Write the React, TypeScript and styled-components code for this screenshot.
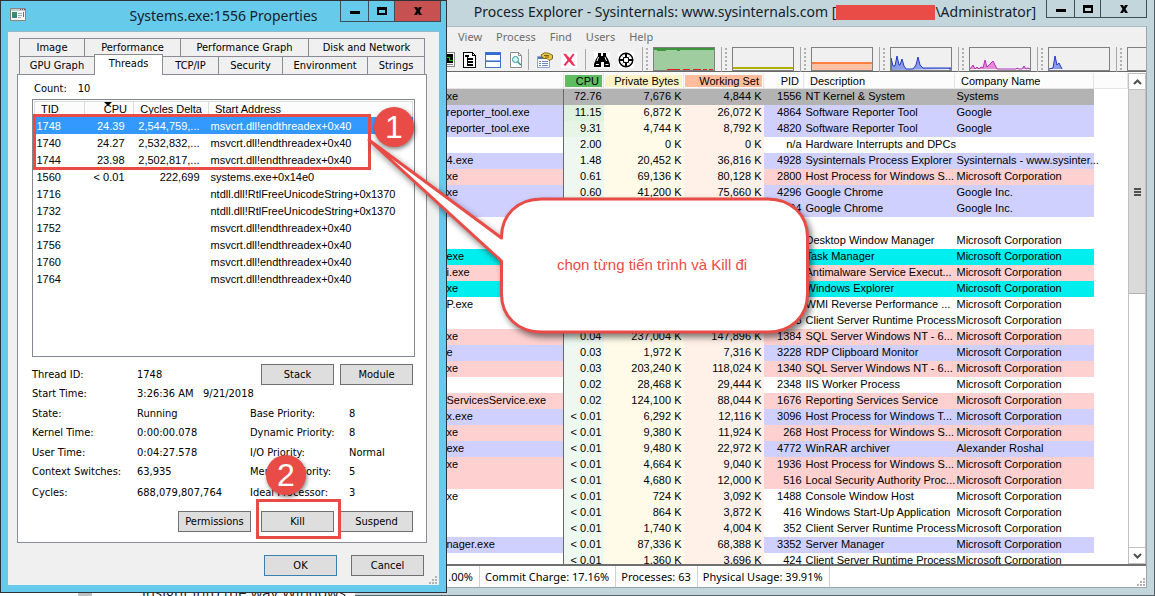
import React from "react";
import styled, { createGlobalStyle, css } from "styled-components";

const UI = `"DejaVu Sans Condensed", "Noto Sans", sans-serif`;
const LIST = `"Liberation Sans", Arial, sans-serif`;
const TITLE = `"Noto Sans", "Open Sans", sans-serif`;
const RED = "#e94b46";

const Global = createGlobalStyle`
  *, *::before, *::after { box-sizing: border-box; }
  body { margin: 0; background: #fff; color: #000; font: 11px/16px ${UI}; }
  button { font: inherit; color: inherit; margin: 0; padding: 0; border-radius: 0; cursor: default; }
  table { border-collapse: collapse; table-layout: fixed; }
  th, td { padding: 0; font-weight: normal; white-space: nowrap; }
  svg { display: block; flex: none; }
`;

const Desktop = styled.main`
  position: relative;
  height: 100vh;
  overflow: hidden;
  display: flex;
  align-items: flex-end;
`;

const PageThumb = styled.span`
  width: 14px;
  height: 8px;
  margin-left: 78px;
  background: #c1c1c1;
`;

const ArticleBehind = styled.p`
  margin: 0 0 -6px;
  padding-left: 50px;
  font: 15px/20px "Open Sans", sans-serif;
  color: #222;
`;

/* ---------- shared window chrome ---------- */

const TitleBar = styled.header<{ $height: number }>`
  height: ${(p) => p.$height}px;
  flex: none;
  display: grid;
  grid-template-columns: 1fr auto 1fr;
  align-items: start;
`;

const Title = styled.h1<{ $line: number }>`
  margin: 0;
  font: 14px/${(p) => p.$line}px ${TITLE};
  color: #16212b;
  white-space: nowrap;
`;

const WindowButtons = styled.div`
  justify-self: end;
  display: flex;
`;

const WindowButton = styled.button<{ $width: number; $height: number; $close?: boolean }>`
  width: ${(p) => p.$width}px;
  height: ${(p) => p.$height}px;
  border: 1px solid #3e4d57;
  border-top: 0;
  margin-left: -1px;
  background: ${(p) => (p.$close ? "#c75050" : "transparent")};
  display: grid;
  place-items: center;
`;

const MinGlyph = () => (
  <svg width="12" height="12" viewBox="0 0 12 12">
    <path d="M1 6h10v3H1z" />
  </svg>
);
const MaxGlyph = () => (
  <svg width="12" height="12" viewBox="0 0 12 12">
    <path fillRule="evenodd" d="M1 2h10v8H1zM3 5v3h6V5z" />
  </svg>
);
const CloseGlyph = () => (
  <svg width="12" height="12" viewBox="0 0 12 12">
    <path d="M2 2h3l1 2 1-2h3L7.500 6 10 10H7L6 8l-1 2H2l2.500-4z" />
  </svg>
);

const Grip = ({ color = "#b4b4b4" }: { color?: string }) => (
  <svg width="9" height="9" viewBox="0 0 9 9" fill={color}>
    <path d="M6 0h2v2H6zM3 3h2v2H3zM6 3h2v2H6zM0 6h2v2H0zM3 6h2v2H3zM6 6h2v2H6z" />
  </svg>
);

/* ---------- Process Explorer ---------- */

const Explorer = styled.section`
  position: absolute;
  inset: 0 0 0 355px;
  padding: 0 7px 7px 8px;
  background: #c2d6db;
  border-right: 1px solid #55626a;
  border-bottom: 1px solid #55626a;
  display: flex;
  flex-direction: column;
`;

const Client = styled.div`
  flex: 1;
  min-height: 0;
  background: #f0f0f0;
  border-top: 1px solid #a9bcc4;
  border-right: 1px solid #9aa6ab;
  border-bottom: 1px solid #9aa6ab;
  display: flex;
  flex-direction: column;
`;

const Redacted = styled.span`
  display: inline-block;
  width: 99px;
  height: 15px;
  vertical-align: -3px;
  background: ${RED};
`;

const MenuBar = styled.nav`
  flex: none;
  height: 20px;
  padding-left: 95px;
  display: flex;
  gap: 14px;
`;

const MenuItem = styled.button`
  border: 0;
  background: none;
  font: 11px/20px ${TITLE};
  color: #6d6d6d;
`;

const Toolbar = styled.div`
  flex: none;
  height: 26px;
  padding-left: 76px;
  border-bottom: 1px solid #fff;
  box-shadow: inset 0 -1px #696969;
  display: flex;
  overflow: hidden;
`;

const IconGroup = styled.div<{ $gap: number; $left?: number; $right?: number }>`
  display: flex;
  align-items: center;
  gap: ${(p) => p.$gap}px;
  padding: 0 ${(p) => p.$right ?? 0}px 0 ${(p) => p.$left ?? 0}px;
`;

const IconButton = styled.button`
  width: 16px;
  height: 16px;
  border: 0;
  background: none;
`;

const ToolSeparator = styled.span`
  flex: none;
  width: 1px;
  height: 21px;
  background: #a8a8a8;
`;

const GraphSlot = styled.div`
  flex: none;
  width: 79px;
  height: 25px;
  display: flex;
  border-left: 1px solid #a8a8a8;
`;

const Dots = styled.span`
  width: 2px;
  margin: 1px 5px 1px 3px;
  background: repeating-linear-gradient(#b0b0b0 0 2px, transparent 2px 4px);
`;

const Graph = styled.svg`
  width: 62px;
  height: 24px;
  border: 1px solid #808080;
`;

const ListArea = styled.div`
  flex: 1;
  min-height: 0;
  display: flex;
  background: #fff;
  border-bottom: 2px solid #707070;
`;

const ListScroll = styled.div`
  flex: 1;
  min-width: 0;
  overflow: hidden;
`;

const ProcTable = styled.table`
  width: 100%;
  font: 11px/16px ${LIST};
`;

const ProcHead = styled.th<{ $fill?: string; $left?: boolean }>`
  height: 15px;
  line-height: 14px;
  padding: 0 4px 0 6px;
  text-align: ${(p) => (p.$left ? "left" : "right")};
  background: ${(p) => p.$fill ?? "#fcfcfc"};
  border: 1px solid #e4e4e4;
  border-top-color: #fcfcfc;
  ${(p) => p.$fill && css`box-shadow: inset 0 0 0 1px #fcfcfc;`}
`;

const ProcRow = styled.tr<{ $bg: string }>`
  height: 16px;
  --row: ${(p) => p.$bg};
`;

const ProcCell = styled.td<{ $num?: boolean; $bg?: string }>`
  height: 16px;
  line-height: 14px;
  padding: ${(p) => (p.$num ? "0 2px 2px" : "0 0 2px 2px")};
  text-align: ${(p) => (p.$num ? "right" : "left")};
  background: ${(p) => p.$bg ?? "var(--row)"};
`;

const NameCell = styled(ProcCell)`
  padding-left: 83px;
  border-right: 1px solid #696969;
`;

const ScrollBar = styled.div`
  flex: none;
  width: 18px;
  display: flex;
  flex-direction: column;
  border: 1px solid #c0c0c0;
  border-width: 0 1px;
  background: #fff;
`;

const ScrollArrow = styled.button`
  height: 17px;
  border: 0 solid #c0c0c0;
  border-width: 1px 0;
  background: #fff;
  display: grid;
  place-items: center;
`;

const ScrollThumb = styled.div`
  height: 204px;
  background: #dadada;
  border-bottom: 1px solid #b0b0b0;
  display: grid;
  place-items: center;
`;

const ScrollTrack = styled.div`
  flex: 1;
`;

const StatusBar = styled.footer`
  flex: none;
  height: 21px;
  background: #fff;
  display: flex;
  align-items: flex-end;
  justify-content: space-between;
  font: 11px/22px ${TITLE};
`;

const StatusList = styled.div`
  display: flex;
  height: 21px;
`;

const StatusItem = styled.span<{ $width?: number }>`
  ${(p) => p.$width && css`width: ${p.$width}px; text-align: right;`}
  padding: 0 6px 0 5px;
  border-right: 1px solid #d0d0d0;
  white-space: nowrap;
`;

const PURPLE = "#d0d0ff";
const PINK = "#ffd0d0";
const CYAN = "#00eeee";
const WHITE = "#ffffff";
const GREY = "#b3b3b3";

type Proc = [string, string, string, string, string, string, string, string];
const MS = "Microsoft Corporation";
const processes: Proc[] = [
  [GREY, "xe", "72.76", "7,676 K", "4,844 K", "1556", "NT Kernel & System", "Systems"],
  [PURPLE, "reporter_tool.exe", "11.15", "6,872 K", "26,072 K", "4864", "Software Reporter Tool", "Google"],
  [PURPLE, "reporter_tool.exe", "9.31", "4,744 K", "8,792 K", "4820", "Software Reporter Tool", "Google"],
  [WHITE, "", "2.00", "0 K", "0 K", "n/a", "Hardware Interrupts and DPCs", ""],
  [PURPLE, "4.exe", "1.48", "20,452 K", "36,816 K", "4928", "Sysinternals Process Explorer", "Sysinternals - www.sysinter..."],
  [PINK, "xe", "0.61", "69,136 K", "80,128 K", "2800", "Host Process for Windows S...", MS],
  [PURPLE, "xe", "0.60", "41,200 K", "75,660 K", "4296", "Google Chrome", "Google Inc."],
  [PURPLE, "", "", "", "", "94", "Google Chrome", "Google Inc."],
  [WHITE, "", "", "", "", "", "", ""],
  [WHITE, "", "", "", "", "", "Desktop Window Manager", MS],
  [CYAN, "exe", "", "", "", "", "Task Manager", MS],
  [PINK, "i.exe", "", "", "", "", "Antimalware Service Execut...", MS],
  [CYAN, "xe", "", "", "", "", "Windows Explorer", MS],
  [WHITE, "P.exe", "", "", "", "", "WMI Reverse Performance ...", MS],
  [WHITE, "", "", "", "", "8", "Client Server Runtime Process", MS],
  [PINK, "xe", "0.04", "237,004 K", "147,896 K", "1384", "SQL Server Windows NT - 6...", MS],
  [PURPLE, "e", "0.03", "1,972 K", "7,316 K", "3228", "RDP Clipboard Monitor", MS],
  [PINK, "xe", "0.03", "203,240 K", "118,024 K", "1340", "SQL Server Windows NT - 6...", MS],
  [WHITE, "", "0.02", "28,468 K", "29,444 K", "2348", "IIS Worker Process", MS],
  [PINK, "ServicesService.exe", "0.02", "124,100 K", "88,044 K", "1676", "Reporting Services Service", MS],
  [PURPLE, "x.exe", "< 0.01", "6,292 K", "12,116 K", "3096", "Host Process for Windows T...", MS],
  [PINK, "xe", "< 0.01", "9,380 K", "11,924 K", "268", "Host Process for Windows S...", MS],
  [PURPLE, "exe", "< 0.01", "9,480 K", "22,972 K", "4772", "WinRAR archiver", "Alexander Roshal"],
  [PINK, "xe", "< 0.01", "4,664 K", "9,040 K", "1936", "Host Process for Windows S...", MS],
  [PINK, "", "< 0.01", "4,680 K", "12,000 K", "516", "Local Security Authority Proc...", MS],
  [WHITE, "xe", "< 0.01", "724 K", "3,092 K", "1488", "Console Window Host", MS],
  [WHITE, "", "< 0.01", "864 K", "3,872 K", "416", "Windows Start-Up Application", MS],
  [WHITE, "", "< 0.01", "1,740 K", "4,004 K", "352", "Client Server Runtime Process", MS],
  [PURPLE, "nager.exe", "< 0.01", "87,336 K", "68,388 K", "3352", "Server Manager", MS],
  [WHITE, "", "< 0.01", "1,360 K", "3,696 K", "424", "Client Server Runtime Process", MS],
];

const cpuTint = (i: number, bg: string) =>
  i === 0 ? bg : i === 1 ? "#e0f1e0" : i === 2 ? "#e6f5e6" : "#eef8f0";

const ConsoleIcon = () => (
  <svg width="16" height="16" viewBox="0 0 16 16" shapeRendering="crispEdges">
    <path fill="#fff" stroke="#888" d="M.5.5h15v14H.5z" />
    <path fill="#000" d="M2 2h12v9H2z" />
    <path fill="none" stroke="#0c0" d="M3 8h4V5h3v3h4" />
    <path fill="#888" d="M2 12h12v1H2z" />
  </svg>
);
const TreeIcon = () => (
  <svg width="16" height="16" viewBox="0 0 16 16" shapeRendering="crispEdges">
    <path fill="#fff" stroke="#000" d="M1.500.500h9l3 3v12h-12z" />
    <path fill="none" stroke="#000" d="M10.500.500v3h3" />
    <path d="M3 3h4v2H3zM5 5h1v9H5zM6 6h5v2H6zM6 9h5v2H6zM6 12h5v2H6z" />
  </svg>
);
const PaneIcon = () => (
  <svg width="16" height="16" viewBox="0 0 16 16" shapeRendering="crispEdges">
    <path fill="#fff" stroke="#3f72c4" d="M.5.500h15v15H.5z" />
    <path fill="#2f6fd0" d="M1 1h14v2H1z" />
    <path fill="#88aee4" d="M1 8h14v1H1z" />
    <path fill="#3f72c4" d="M1 9h14v1H1z" />
  </svg>
);
const DllIcon = () => (
  <svg width="16" height="16" viewBox="0 0 16 16">
    <path fill="#fdfdfd" stroke="#8c8c8c" d="M2.500.500h8l3 3v12h-11z" />
    <path fill="none" stroke="#8c8c8c" d="M10.500.500v3h3" />
    <circle cx="7.500" cy="7.500" r="3" fill="#d8f4f4" stroke="#25999d" />
    <path stroke="#25999d" strokeWidth="1.500" d="M9.800 9.800l3 3.200" />
  </svg>
);
const PropertiesIcon = () => (
  <svg width="16" height="16" viewBox="0 0 16 16">
    <path fill="#fff" stroke="#8fa5c4" d="M.5 4.500h12v11H.5z" />
    <path fill="#4976b6" d="M1 5h6v2H1z" />
    <path stroke="#6f8ab4" d="M2 9.500h2M5 9.500h6M2 11.500h2M5 11.500h6M2 13.500h2M5 13.500h6" />
    <path fill="#f0c63c" stroke="#5e4a12" strokeWidth=".8" d="M4 3L7.500.800l4 .400 4 2v3.500L12 8.500 10 6.500H7L5 5z" />
    <path stroke="#5e4a12" strokeWidth=".8" d="M7 3.500h5M8 5h4" />
  </svg>
);
const KillIcon = () => (
  <svg width="16" height="16" viewBox="0 0 16 16">
    <path fill="#fff" d="M0 0h16v16H0z" />
    <path fill="#f0305a" d="M2 1.500l3 .5 3.500 4L12 1.500l1.500 1L10 7.500l4.500 6.500-3-.5L8 9.500 4.500 14l-2-1L6.500 8z" />
  </svg>
);
const FindIcon = () => (
  <svg width="16" height="16" viewBox="0 0 16 16">
    <path fill="#fff" d="M0 0h16v16H0z" />
    <path d="M4 1h3v3h2V1h3v3l2 3 2 5v3h-6v-5H7v5H0v-3l2-5 2-3z" />
    <path stroke="#fff" d="M4.500 5L3 9M2 12.500h3M11 5l1.500 4M11.500 12.500h3" />
  </svg>
);
const TargetIcon = () => (
  <svg width="16" height="16" viewBox="0 0 16 16" fill="none" stroke="#000">
    <path fill="#fff" stroke="none" d="M0 0h16v16H0z" />
    <circle cx="8" cy="8" r="6.800" strokeWidth="1.400" />
    <circle cx="8" cy="8" r="3" />
    <path strokeWidth="2" d="M8 1v5M8 10v5M1 8h5M10 8h5" />
    <path strokeDasharray="1 1" d="M3.500 3.500l3 3M12.500 3.500l-3 3M3.500 12.500l3-3M12.500 12.500l-3-3" />
  </svg>
);

const graphs: { name: string; body: React.ReactNode }[] = [
  {
    name: "CPU",
    body: (
      <g shapeRendering="crispEdges">
        <path fill="#9fcd9f" d="M0 0h60v22H0z" />
        <path fill="#3c963c" d="M0 0h60v2H26v1h-3V2H12v1H3V2H0z" />
        <path fill="#e02020" d="M13 21h13v1H13zM29 21h7v1h-7zM39 21h8v1h-8zM49 21h4v1h-4zM55 21h4v1h-4z" />
      </g>
    ),
  },
  { name: "Commit", body: <path fill="#b0b000" d="M0 19h60v2H0z" /> },
  {
    name: "Physical memory",
    body: (
      <>
        <path fill="#ffc1a3" d="M0 15h60v7H0z" />
        <path fill="#ff8040" d="M0 14h60v2H0z" />
      </>
    ),
  },
  {
    name: "I/O",
    body: (
      <path
        fill="#8c9ce6"
        stroke="#2038c8"
        d="M0 22V10l2 8 2 0 2-10 2 9 1 0 2-6 2 7 2 3h7l3-4 2-8 2 8 3 3h28v1h-2"
      />
    ),
  },
  {
    name: "Network",
    body: (
      <path
        fill="#e88ad8"
        stroke="#b030b8"
        d="M0 21l3-4 2 4 2-2 2 2 2-2 2 1 2-8 2 7 3-3 3-3 2 4 2 4h19l1-1 2 1h3l2-3 2 3 2-1 2 1"
      />
    ),
  },
  {
    name: "Disk",
    body: <path fill="#8c9ce6" stroke="#2038c8" d="M0 21l4-1 2-12 2 9 2-2 3 6" />,
  },
  { name: "GPU", body: null },
];

const ProcessExplorer = () => (
  <Explorer>
    <TitleBar $height={26}>
      <span />
      <Title $line={23}>
        Process Explorer - Sysinternals: www.sysinternals.com [<Redacted />
        \Administrator]
      </Title>
      <WindowButtons>
        <WindowButton $width={29} $height={18} aria-label="Minimize"><MinGlyph /></WindowButton>
        <WindowButton $width={27} $height={18} aria-label="Maximize"><MaxGlyph /></WindowButton>
        <WindowButton $width={47} $height={18} aria-label="Close"><CloseGlyph /></WindowButton>
      </WindowButtons>
    </TitleBar>
    <Client>
      <MenuBar>
        {["View", "Process", "Find", "Users", "Help"].map((m) => (
          <MenuItem key={m}>{m}</MenuItem>
        ))}
      </MenuBar>
      <Toolbar>
        <IconGroup $gap={7}>
          <IconButton aria-label="System information"><ConsoleIcon /></IconButton>
          <IconButton aria-label="Process tree"><TreeIcon /></IconButton>
          <IconButton aria-label="Lower pane"><PaneIcon /></IconButton>
          <IconButton aria-label="View DLLs"><DllIcon /></IconButton>
        </IconGroup>
        <IconGroup $gap={8} $left={4} $right={8}>
          <ToolSeparator />
          <IconButton aria-label="Properties"><PropertiesIcon /></IconButton>
          <IconButton aria-label="Kill process"><KillIcon /></IconButton>
          <ToolSeparator />
          <IconButton aria-label="Find"><FindIcon /></IconButton>
          <IconButton aria-label="Find window"><TargetIcon /></IconButton>
        </IconGroup>
        {graphs.map((g) => (
          <GraphSlot key={g.name}>
            <Dots />
            <Graph viewBox="0 0 60 22" role="img" aria-label={g.name}>{g.body}</Graph>
          </GraphSlot>
        ))}
      </Toolbar>
      <ListArea>
        <ListScroll>
          <ProcTable>
            <colgroup>
              <col width="200" />
              <col width="40" />
              <col width="80" />
              <col width="80" />
              <col width="40" />
              <col width="151" />
              <col width="139" />
              <col />
            </colgroup>
            <thead>
              <tr>
                <ProcHead />
                <ProcHead $fill="#5dbd5f">CPU</ProcHead>
                <ProcHead $fill="#fff2c4">Private Bytes</ProcHead>
                <ProcHead $fill="#ffbd9d">Working Set</ProcHead>
                <ProcHead>PID</ProcHead>
                <ProcHead $left>Description</ProcHead>
                <ProcHead $left>Company Name</ProcHead>
                <ProcHead />
              </tr>
            </thead>
            <tbody>
              {processes.map(([bg, name, cpu, priv, ws, pid, desc, company], i) => (
                <ProcRow key={i} $bg={bg}>
                  <NameCell>{name}</NameCell>
                  <ProcCell $num $bg={cpuTint(i, bg)}>{cpu}</ProcCell>
                  <ProcCell $num $bg={i ? "#fffbe8" : undefined}>{priv}</ProcCell>
                  <ProcCell $num $bg={i ? "#fff0e8" : undefined}>{ws}</ProcCell>
                  <ProcCell $num>{pid}</ProcCell>
                  <ProcCell>{desc}</ProcCell>
                  <ProcCell>{company}</ProcCell>
                  <ProcCell $bg="#fff" />
                </ProcRow>
              ))}
            </tbody>
          </ProcTable>
        </ListScroll>
        <ScrollBar>
          <ScrollArrow aria-label="Scroll up">
            <svg width="9" height="6" viewBox="0 0 9 6" fill="none" stroke="#505050" strokeWidth="2"><path d="M1 5l3.500-3.500L8 5" /></svg>
          </ScrollArrow>
          <ScrollThumb>
            <svg width="7" height="8" viewBox="0 0 7 8" fill="#505050"><path d="M0 0h7v2H0zM0 3h7v2H0zM0 6h7v2H0z" /></svg>
          </ScrollThumb>
          <ScrollTrack />
          <ScrollArrow aria-label="Scroll down">
            <svg width="9" height="6" viewBox="0 0 9 6" fill="none" stroke="#505050" strokeWidth="2"><path d="M1 1l3.500 3.500L8 1" /></svg>
          </ScrollArrow>
        </ScrollBar>
      </ListArea>
      <StatusBar>
        <StatusList>
          <StatusItem $width={117}>.00%</StatusItem>
          <StatusItem>Commit Charge: 17.16%</StatusItem>
          <StatusItem>Processes: 63</StatusItem>
          <StatusItem>Physical Usage: 39.91%</StatusItem>
        </StatusList>
        <Grip />
      </StatusBar>
    </Client>
  </Explorer>
);

/* ---------- Properties dialog ---------- */

const Dialog = styled.section`
  position: absolute;
  left: 0;
  top: 0;
  width: 447px;
  padding: 0 7px 7px;
  background: #66cbea;
  border: 1px solid #2d3338;
`;

const DialogIcon = styled.span`
  padding: 7px 0 0 2px;
`;

const DialogButtons = styled(WindowButtons)`
  margin-right: -2px;
`;

const DialogBody = styled.div`
  padding: 6px 12px 0 9px;
  background: #f0f0f0;
  border-top: 1px solid #93b9c8;
`;

const TabRow = styled.div`
  display: flex;
  margin: 0 1px 0 2px;
`;

const Tab = styled.button<{ $width: number; $active?: boolean }>`
  width: ${(p) => p.$width}px;
  height: 18px;
  border: 1px solid #898c95;
  border-bottom: 0;
  margin-right: -1px;
  background: #f0f0f0;
  &:last-child { margin-right: 0; }
  ${(p) =>
    p.$active &&
    css`
      position: relative;
      z-index: 1;
      height: 21px;
      margin: -2px -1px -1px 0;
      padding-bottom: 3px;
      background: #fff;
    `}
`;

const Panel = styled.div`
  padding: 5px 11px 9px 14px;
  background: #fff;
  border: 1px solid #898c95;
`;

const Count = styled.p`
  margin: 0;
  padding-left: 2px;
  line-height: 18px;
  display: flex;
  gap: 11px;
`;

const ThreadBox = styled.div`
  height: 258px;
  margin-top: 1px;
  margin-bottom: 8px;
  padding: 1px 1px 0;
  border: 1px solid #828790;
`;

const ThreadTable = styled.table`
  width: 100%;
  font: 11px/16px ${LIST};
`;

const ThreadHead = styled.th<{ $num?: boolean }>`
  height: 15px;
  line-height: 15px;
  padding: 0 6px;
  text-align: ${(p) => (p.$num ? "right" : "left")};
  background: #fcfcfc;
  border: 1px solid #dcdcdc;
  border-bottom: 0;
`;

const SortMark = styled.span`
  position: relative;
  &::before {
    content: "";
    position: absolute;
    left: 0;
    top: -1px;
    border: 4px solid transparent;
    border-top-color: #000;
    border-bottom: 0;
  }
`;

const ThreadRow = styled.tr<{ $selected?: boolean }>`
  height: 17px;
  background: ${(p) => (p.$selected ? "#3399ff" : "#fff")};
  color: ${(p) => (p.$selected ? "#fff" : "#000")};
`;

const ThreadCell = styled.td<{ $num?: boolean }>`
  height: 17px;
  padding: 0 9px 0 2px;
  text-align: ${(p) => (p.$num ? "right" : "left")};
`;

const Details = styled.div`
  display: grid;
  grid-template-columns: 105px 113px 99px 1fr;
  grid-template-rows: 19px 20px 19px 20px 19px 20px 21px;
  align-items: center;
`;

const Value = styled.span`
  white-space: nowrap;
`;

const TopButtons = styled.div`
  grid-column: 3 / 5;
  grid-row: 1;
  display: flex;
  gap: 6px;
  padding-left: 11px;
`;

const PushButton = styled.button<{ $default?: boolean }>`
  width: 73px;
  height: 21px;
  background: #dedede;
  border: 1px solid ${(p) => (p.$default ? "#3c7fb1" : "#707070")};
`;

const ActionRow = styled.div`
  display: flex;
  justify-content: flex-end;
  gap: 6px;
  padding: 8px 2px 1px 0;
`;

const KillSlot = styled.span`
  margin-left: 4px;
`;

const DialogFooter = styled.div`
  display: flex;
  justify-content: flex-end;
  gap: 14px;
  padding: 12px 3px 0 0;
`;

const GripRow = styled.div`
  display: flex;
  justify-content: flex-end;
  margin-right: -11px;
`;

const threads = [
  ["1748", "24.39", "2,544,759,...", "msvcrt.dll!endthreadex+0x40"],
  ["1740", "24.27", "2,532,832,...", "msvcrt.dll!endthreadex+0x40"],
  ["1744", "23.98", "2,502,817,...", "msvcrt.dll!endthreadex+0x40"],
  ["1560", "< 0.01", "222,699", "systems.exe+0x14e0"],
  ["1716", "", "", "ntdll.dll!RtlFreeUnicodeString+0x1370"],
  ["1732", "", "", "ntdll.dll!RtlFreeUnicodeString+0x1370"],
  ["1752", "", "", "msvcrt.dll!endthreadex+0x40"],
  ["1756", "", "", "msvcrt.dll!endthreadex+0x40"],
  ["1760", "", "", "msvcrt.dll!endthreadex+0x40"],
  ["1764", "", "", "msvcrt.dll!endthreadex+0x40"],
];

const details = [
  ["State:", "Running", "Base Priority:", "8"],
  ["Kernel Time:", "0:00:00.078", "Dynamic Priority:", "8"],
  ["User Time:", "0:04:27.578", "I/O Priority:", "Normal"],
  ["Context Switches:", "63,935", "Memory Priority:", "5"],
  ["Cycles:", "688,079,807,764", "Ideal Processor:", "3"],
];

const PropertiesDialog = () => (
  <Dialog>
    <TitleBar $height={30}>
      <DialogIcon>
        <svg width="16" height="13" viewBox="0 0 16 13">
          <path fill="#f6f6f6" stroke="#8d8478" d="M.5.500h15v12H.5z" />
          <path fill="#c6cdd0" d="M1 1h14v2H1z" />
          <path fill="#555" d="M10 1h1v1h-1zM12 1h1v1h-1zM14 1h1v1h-1z" />
          <path fill="#3a8a78" d="M2 4h5v6H2z" />
          <path stroke="#a8adb0" d="M8 5.500h4M8 7.500h4M8 9.500h3" />
          <path stroke="#4f79a8" d="M13.500 4v5" />
        </svg>
      </DialogIcon>
      <Title $line={30}>Systems.exe:1556 Properties</Title>
      <DialogButtons>
        <WindowButton $width={29} $height={21} aria-label="Minimize"><MinGlyph /></WindowButton>
        <WindowButton $width={27} $height={21} aria-label="Maximize"><MaxGlyph /></WindowButton>
        <WindowButton $width={47} $height={21} $close aria-label="Close"><CloseGlyph /></WindowButton>
      </DialogButtons>
    </TitleBar>
    <DialogBody>
      <TabRow>
        <Tab $width={66}>Image</Tab>
        <Tab $width={97}>Performance</Tab>
        <Tab $width={129}>Performance Graph</Tab>
        <Tab $width={117}>Disk and Network</Tab>
      </TabRow>
      <TabRow>
        <Tab $width={76}>GPU Graph</Tab>
        <Tab $width={69} $active>Threads</Tab>
        <Tab $width={57}>TCP/IP</Tab>
        <Tab $width={65}>Security</Tab>
        <Tab $width={86}>Environment</Tab>
        <Tab $width={58}>Strings</Tab>
      </TabRow>
      <Panel>
        <Count><span>Count:</span><span>10</span></Count>
        <ThreadBox>
          <ThreadTable>
            <colgroup>
              <col width="50" />
              <col width="49" />
              <col width="75" />
              <col />
            </colgroup>
            <thead>
              <tr>
                <ThreadHead>TID</ThreadHead>
                <ThreadHead $num><SortMark>CPU</SortMark></ThreadHead>
                <ThreadHead $num>Cycles Delta</ThreadHead>
                <ThreadHead>Start Address</ThreadHead>
              </tr>
            </thead>
            <tbody>
              {threads.map(([tid, cpu, delta, start], i) => (
                <ThreadRow key={tid} $selected={i === 0}>
                  <ThreadCell>{tid}</ThreadCell>
                  <ThreadCell $num>{cpu}</ThreadCell>
                  <ThreadCell $num>{delta}</ThreadCell>
                  <ThreadCell>{start}</ThreadCell>
                </ThreadRow>
              ))}
            </tbody>
          </ThreadTable>
        </ThreadBox>
        <Details>
          <Value>Thread ID:</Value>
          <Value>1748</Value>
          <TopButtons>
            <PushButton>Stack</PushButton>
            <PushButton>Module</PushButton>
          </TopButtons>
          <Value>Start Time:</Value>
          <Value>3:26:36 AM &nbsp; 9/21/2018</Value>
          <span />
          <span />
          {details.flat().map((t, i) => (
            <Value key={i}>{t}</Value>
          ))}
        </Details>
        <ActionRow>
          <PushButton>Permissions</PushButton>
          <KillSlot><PushButton>Kill</PushButton></KillSlot>
          <PushButton>Suspend</PushButton>
        </ActionRow>
      </Panel>
      <DialogFooter>
        <PushButton $default>OK</PushButton>
        <PushButton>Cancel</PushButton>
      </DialogFooter>
      <GripRow><Grip /></GripRow>
    </DialogBody>
  </Dialog>
);

/* ---------- annotations laid over the windows ---------- */

const Highlight = styled.div<{ $x: number; $y: number; $w: number; $h: number }>`
  position: absolute;
  left: ${(p) => p.$x}px;
  top: ${(p) => p.$y}px;
  width: ${(p) => p.$w}px;
  height: ${(p) => p.$h}px;
  border: 3px solid ${RED};
  pointer-events: none;
`;

const StepBadge = styled.span<{ $x: number; $y: number }>`
  position: absolute;
  left: ${(p) => p.$x}px;
  top: ${(p) => p.$y}px;
  width: 40px;
  height: 40px;
  border-radius: 50%;
  background: ${RED};
  color: #fff;
  font: 32px/40px "Liberation Sans", sans-serif;
  text-align: center;
  box-shadow: 1px 2px 4px rgba(0, 0, 0, 0.5);
`;

const Callout = styled.div`
  position: absolute;
  left: 360px;
  top: 130px;
  width: 460px;
  height: 220px;
  padding: 66px 14px 17px 138px;
  display: grid;
  place-items: center;
  color: ${RED};
  font: 15px/20px "Liberation Sans", sans-serif;
`;

const Bubble = styled.svg`
  position: absolute;
  inset: 0;
  filter: drop-shadow(3px 4px 3px rgba(0, 0, 0, 0.5));
`;

const CalloutText = styled.span`
  position: relative;
`;

export default function App() {
  return (
    <>
      <Global />
      <Desktop>
        <PageThumb />
        <ArticleBehind>insight into the way Windows</ArticleBehind>
        <ProcessExplorer />
        <PropertiesDialog />
        <Highlight $x={33} $y={114} $w={338} $h={56} />
        <Highlight $x={256} $y={499} $w={85} $h={40} />
        <Callout>
          <Bubble width="460" height="220" viewBox="0 0 460 220">
            <path
              fill="#fff"
              stroke={RED}
              strokeWidth="3"
              strokeLinejoin="round"
              d="M141.500 108V107c0-22 16-38 40-38h226c24 0 40 16 40 38v57c0 22-16 38-40 38h-226c-24 0-40-16-40-38v-33L9 10z"
            />
          </Bubble>
          <CalloutText>chọn từng tiến trình và Kill đi</CalloutText>
        </Callout>
        <StepBadge $x={374} $y={107}>1</StepBadge>
        <StepBadge $x={266} $y={455}>2</StepBadge>
      </Desktop>
    </>
  );
}
